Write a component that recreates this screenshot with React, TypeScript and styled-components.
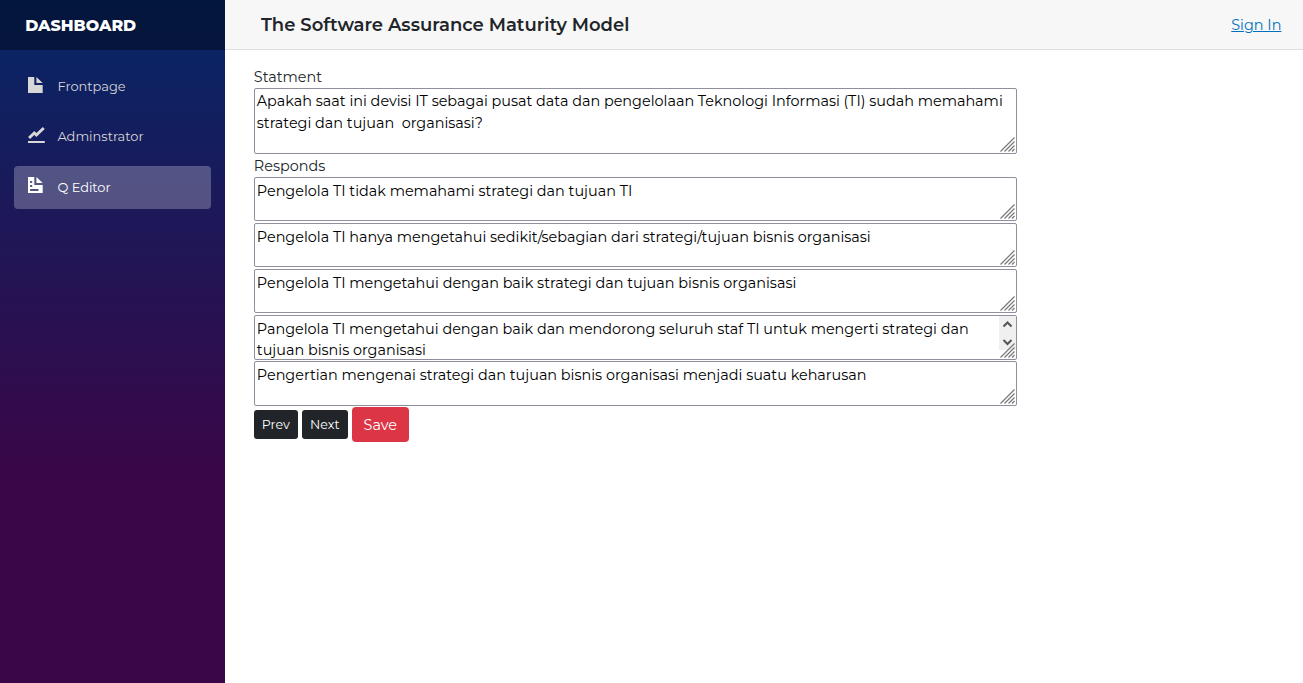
import React from "react";
import styled, { createGlobalStyle } from "styled-components";

const GlobalStyle = createGlobalStyle`
  *, *::before, *::after { box-sizing: border-box; }
  body {
    margin: 0;
    background: #fff;
    color: #212529;
    font-family: Montserrat, Inter, sans-serif;
    font-size: 14.4px;
    line-height: 21.6px;
  }
`;

const Page = styled.div`
  display: flex;
  height: 100vh;
  overflow: hidden;
`;

const Sidebar = styled.aside`
  width: 225px;
  flex: none;
  background: linear-gradient(180deg, rgb(5, 39, 103) 0%, #3a0647 70%);
`;

const Brand = styled.div`
  height: 50px;
  padding: 1px 0 0 25.2px;
  display: flex;
  align-items: center;
  background: rgba(0, 0, 0, 0.4);
  color: #fff;
  font-size: 15.84px;
  font-weight: 800;
`;

const Nav = styled.nav`
  display: flex;
  flex-direction: column;
  gap: 7px;
  padding: 15px 14px 0;
`;

const NavItem = styled.a<{ $active?: boolean }>`
  height: 43px;
  margin-top: ${(p) => (p.$active ? 1 : 0)}px;
  padding: 0 0 0 14.2px;
  display: flex;
  align-items: center;
  border-radius: 4px;
  background: ${(p) => (p.$active ? "rgba(255, 255, 255, 0.25)" : "transparent")};
  color: ${(p) => (p.$active ? "#fff" : "#d7d7d7")};
  font-size: 12.96px;
`;

const NavIcon = styled.svg<{ $lift: number }>`
  width: 16.8px;
  height: 16px;
  margin: 0 12.4px ${(p) => p.$lift}px 0;
  fill: currentColor;
`;

const Main = styled.main`
  flex: 1;
  min-width: 0;
`;

const TopBar = styled.header`
  height: 50px;
  padding: 2px 21.6px 0 36px;
  display: flex;
  align-items: center;
  justify-content: space-between;
  background: #f7f7f7;
  border-bottom: 1px solid #dfdede;
`;

const Title = styled.h1`
  margin: 0;
  font-size: 18px;
  font-weight: 600;
`;

const SignIn = styled.a`
  color: #0071c1;
  text-decoration: underline;
`;

const Form = styled.section`
  padding: 16.8px 0 0 28.8px;
`;

const Label = styled.div`
  height: 21.2px;
`;

const ResponseLabel = styled(Label)`
  height: 23px;
  padding-top: 1.8px;
`;

const Field = styled.div<{ $height: number; $top: number }>`
  position: relative;
  width: 763px;
  height: ${(p) => p.$height}px;
  padding: ${(p) => p.$top}px 2px 0;
  border: 1px solid #8f8f9d;
  border-radius: 2px;
  overflow: hidden;
  color: #000;
  white-space: pre;
`;

const Answers = styled.div`
  display: flex;
  flex-direction: column;
  gap: 1.8px;
`;

const Grip = styled.svg`
  position: absolute;
  right: 1px;
  bottom: 1px;
  width: 15px;
  height: 15px;
  stroke: #777;
  stroke-width: 1.2;
`;

const ScrollBar = styled.svg`
  position: absolute;
  top: 0;
  right: 0;
  width: 17px;
  height: 34px;
  background: #f0f0f0;
  fill: none;
  stroke: #555;
  stroke-width: 2;
`;

const Actions = styled.div`
  display: flex;
  align-items: center;
  gap: 4px;
  margin-top: 1.5px;
`;

const Button = styled.button<{ $width: number; $primary?: boolean }>`
  width: ${(p) => p.$width}px;
  height: ${(p) => (p.$primary ? 35 : 29)}px;
  padding: ${(p) => (p.$primary ? 1 : 0)}px 0 0;
  border: 0;
  border-radius: ${(p) => (p.$primary ? 4 : 3)}px;
  background: ${(p) => (p.$primary ? "#dc3545" : "#212529")};
  color: #fff;
  font-family: inherit;
  font-size: ${(p) => (p.$primary ? 14.4 : 12.6)}px;
`;

const question = [
  "Apakah saat ini devisi IT sebagai pusat data dan pengelolaan Teknologi Informasi (TI) sudah memahami",
  "strategi dan tujuan  organisasi?",
];

const answers = [
  ["Pengelola TI tidak memahami strategi dan tujuan TI"],
  ["Pengelola TI hanya mengetahui sedikit/sebagian dari strategi/tujuan bisnis organisasi"],
  ["Pengelola TI mengetahui dengan baik strategi dan tujuan bisnis organisasi"],
  [
    "Pangelola TI mengetahui dengan baik dan mendorong seluruh staf TI untuk mengerti strategi dan",
    "tujuan bisnis organisasi",
  ],
  ["Pengertian mengenai strategi dan tujuan bisnis organisasi menjadi suatu keharusan"],
];

const nav = [
  { text: "Frontpage", path: "M0 0v8h7v-4h-4v-4h-3zm4 0v3h3l-3-3z" },
  { text: "Adminstrator", path: "M7.03 0l-3.03 3-1-1-3 3.03 1 1 2-2.03 1 1 4-4-.97-1zm-7.03 7v1h8v-1h-8z" },
  {
    text: "Q Editor",
    active: true,
    path: "M0 0v8h7v-4h-4v-4h-3zm4 0v3h3l-3-3zm-3 2h1v1h-1v-1zm0 2h1v1h-1v-1zm0 2h4v1h-4v-1z",
  },
];

type TextFieldProps = { lines: string[]; height: number; top: number; scroll?: boolean };

function TextField({ lines, height, top, scroll }: TextFieldProps) {
  return (
    <Field $height={height} $top={top}>
      {lines.map((line) => (
        <div key={line}>{line}</div>
      ))}
      {scroll && (
        <ScrollBar viewBox="0 0 17 34">
          <path d="M4.5 10.5l4-4 4 4M4.5 24l4 4 4-4" />
        </ScrollBar>
      )}
      <Grip viewBox="0 0 15 15">
        <path d="M0.5 14.5l14-14M4.5 14.5l10-10M8.5 14.5l6-6M12 14.5l2.5-2.5" />
      </Grip>
    </Field>
  );
}

export default function App() {
  return (
    <Page>
      <GlobalStyle />
      <Sidebar>
        <Brand>DASHBOARD</Brand>
        <Nav>
          {nav.map((n) => (
            <NavItem key={n.text} $active={n.active}>
              <NavIcon $lift={n.active ? 5 : 3} viewBox="0 0 8 8" preserveAspectRatio="none">
                <path d={n.path} />
              </NavIcon>
              {n.text}
            </NavItem>
          ))}
        </Nav>
      </Sidebar>
      <Main>
        <TopBar>
          <Title>The Software Assurance Maturity Model</Title>
          <SignIn>Sign In</SignIn>
        </TopBar>
        <Form>
          <Label>Statment</Label>
          <TextField lines={question} height={66} top={2} />
          <ResponseLabel>Responds</ResponseLabel>
          <Answers>
            {answers.map((a) => (
              <TextField key={a[0]} lines={a} height={44.3} top={2.55} scroll={a.length > 1} />
            ))}
          </Answers>
          <Actions>
            <Button $width={44}>Prev</Button>
            <Button $width={46}>Next</Button>
            <Button $width={57} $primary>Save</Button>
          </Actions>
        </Form>
      </Main>
    </Page>
  );
}
